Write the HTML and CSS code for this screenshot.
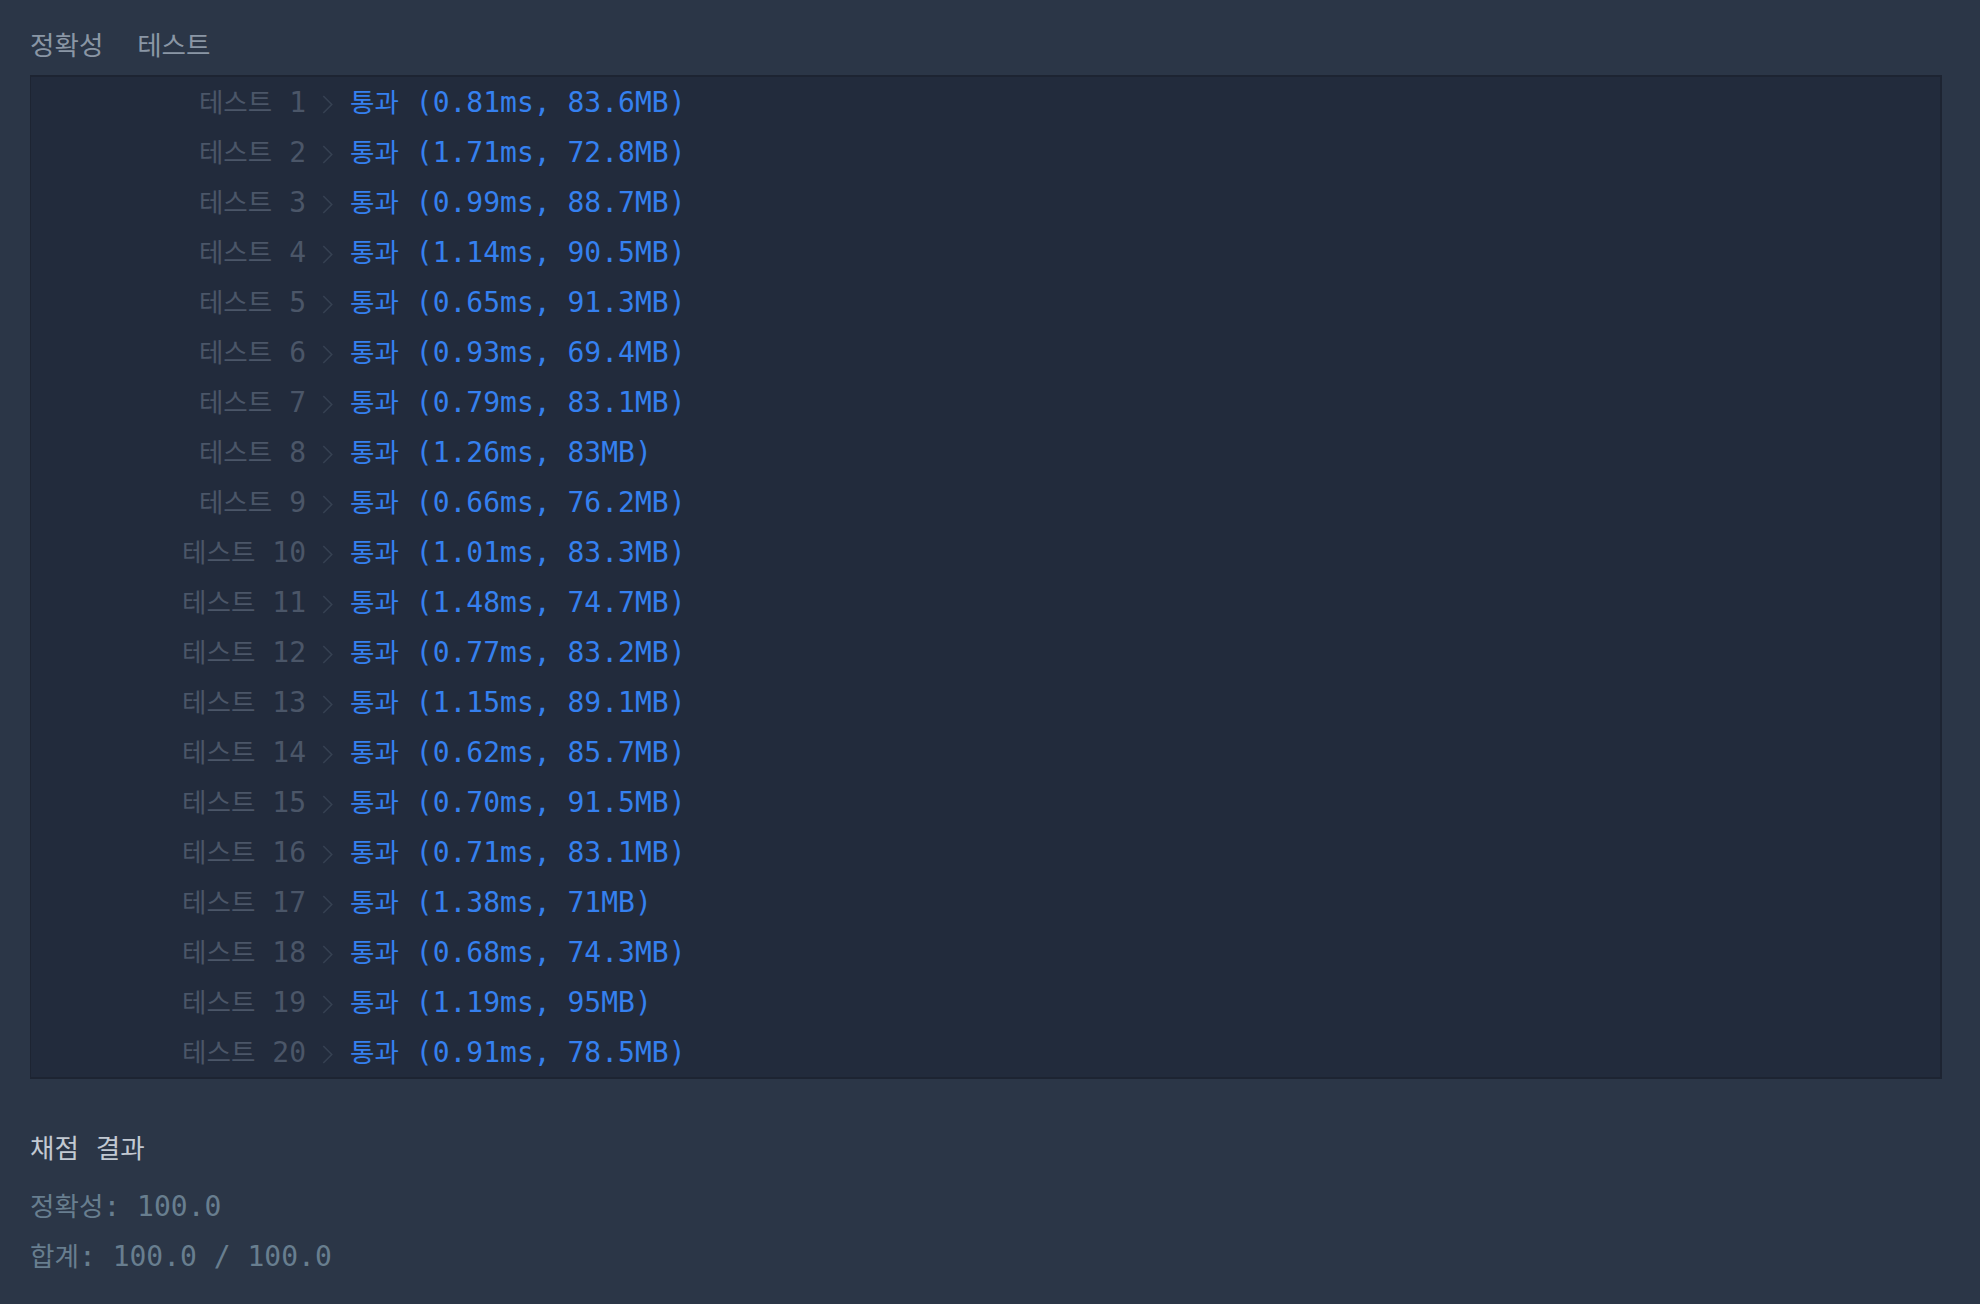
FILE: index.html
```html
<!doctype html>
<html lang="ko">
  <head>
    <meta charset="UTF-8" />
    <meta name="viewport" content="width=device-width, initial-scale=1.0" />
    <title>채점 결과</title>
    <link rel="stylesheet" href="styles.css">
  </head>

  <body>
    <div class="section-title"><span class="ko">정확성</span>  <span class="ko">테스트</span></div>

    <div class="result-box">
      <div class="test-row"><span class="test-label"><span class="ko">테스트</span> 1</span><svg class="chevron" viewBox="0 0 10 18"><path d="M1 1 L9 9 L1 17" /></svg><span class="test-result"><span class="ko">통과</span> (0.81ms, 83.6MB)</span></div>
      <div class="test-row"><span class="test-label"><span class="ko">테스트</span> 2</span><svg class="chevron" viewBox="0 0 10 18"><path d="M1 1 L9 9 L1 17" /></svg><span class="test-result"><span class="ko">통과</span> (1.71ms, 72.8MB)</span></div>
      <div class="test-row"><span class="test-label"><span class="ko">테스트</span> 3</span><svg class="chevron" viewBox="0 0 10 18"><path d="M1 1 L9 9 L1 17" /></svg><span class="test-result"><span class="ko">통과</span> (0.99ms, 88.7MB)</span></div>
      <div class="test-row"><span class="test-label"><span class="ko">테스트</span> 4</span><svg class="chevron" viewBox="0 0 10 18"><path d="M1 1 L9 9 L1 17" /></svg><span class="test-result"><span class="ko">통과</span> (1.14ms, 90.5MB)</span></div>
      <div class="test-row"><span class="test-label"><span class="ko">테스트</span> 5</span><svg class="chevron" viewBox="0 0 10 18"><path d="M1 1 L9 9 L1 17" /></svg><span class="test-result"><span class="ko">통과</span> (0.65ms, 91.3MB)</span></div>
      <div class="test-row"><span class="test-label"><span class="ko">테스트</span> 6</span><svg class="chevron" viewBox="0 0 10 18"><path d="M1 1 L9 9 L1 17" /></svg><span class="test-result"><span class="ko">통과</span> (0.93ms, 69.4MB)</span></div>
      <div class="test-row"><span class="test-label"><span class="ko">테스트</span> 7</span><svg class="chevron" viewBox="0 0 10 18"><path d="M1 1 L9 9 L1 17" /></svg><span class="test-result"><span class="ko">통과</span> (0.79ms, 83.1MB)</span></div>
      <div class="test-row"><span class="test-label"><span class="ko">테스트</span> 8</span><svg class="chevron" viewBox="0 0 10 18"><path d="M1 1 L9 9 L1 17" /></svg><span class="test-result"><span class="ko">통과</span> (1.26ms, 83MB)</span></div>
      <div class="test-row"><span class="test-label"><span class="ko">테스트</span> 9</span><svg class="chevron" viewBox="0 0 10 18"><path d="M1 1 L9 9 L1 17" /></svg><span class="test-result"><span class="ko">통과</span> (0.66ms, 76.2MB)</span></div>
      <div class="test-row"><span class="test-label"><span class="ko">테스트</span> 10</span><svg class="chevron" viewBox="0 0 10 18"><path d="M1 1 L9 9 L1 17" /></svg><span class="test-result"><span class="ko">통과</span> (1.01ms, 83.3MB)</span></div>
      <div class="test-row"><span class="test-label"><span class="ko">테스트</span> 11</span><svg class="chevron" viewBox="0 0 10 18"><path d="M1 1 L9 9 L1 17" /></svg><span class="test-result"><span class="ko">통과</span> (1.48ms, 74.7MB)</span></div>
      <div class="test-row"><span class="test-label"><span class="ko">테스트</span> 12</span><svg class="chevron" viewBox="0 0 10 18"><path d="M1 1 L9 9 L1 17" /></svg><span class="test-result"><span class="ko">통과</span> (0.77ms, 83.2MB)</span></div>
      <div class="test-row"><span class="test-label"><span class="ko">테스트</span> 13</span><svg class="chevron" viewBox="0 0 10 18"><path d="M1 1 L9 9 L1 17" /></svg><span class="test-result"><span class="ko">통과</span> (1.15ms, 89.1MB)</span></div>
      <div class="test-row"><span class="test-label"><span class="ko">테스트</span> 14</span><svg class="chevron" viewBox="0 0 10 18"><path d="M1 1 L9 9 L1 17" /></svg><span class="test-result"><span class="ko">통과</span> (0.62ms, 85.7MB)</span></div>
      <div class="test-row"><span class="test-label"><span class="ko">테스트</span> 15</span><svg class="chevron" viewBox="0 0 10 18"><path d="M1 1 L9 9 L1 17" /></svg><span class="test-result"><span class="ko">통과</span> (0.70ms, 91.5MB)</span></div>
      <div class="test-row"><span class="test-label"><span class="ko">테스트</span> 16</span><svg class="chevron" viewBox="0 0 10 18"><path d="M1 1 L9 9 L1 17" /></svg><span class="test-result"><span class="ko">통과</span> (0.71ms, 83.1MB)</span></div>
      <div class="test-row"><span class="test-label"><span class="ko">테스트</span> 17</span><svg class="chevron" viewBox="0 0 10 18"><path d="M1 1 L9 9 L1 17" /></svg><span class="test-result"><span class="ko">통과</span> (1.38ms, 71MB)</span></div>
      <div class="test-row"><span class="test-label"><span class="ko">테스트</span> 18</span><svg class="chevron" viewBox="0 0 10 18"><path d="M1 1 L9 9 L1 17" /></svg><span class="test-result"><span class="ko">통과</span> (0.68ms, 74.3MB)</span></div>
      <div class="test-row"><span class="test-label"><span class="ko">테스트</span> 19</span><svg class="chevron" viewBox="0 0 10 18"><path d="M1 1 L9 9 L1 17" /></svg><span class="test-result"><span class="ko">통과</span> (1.19ms, 95MB)</span></div>
      <div class="test-row"><span class="test-label"><span class="ko">테스트</span> 20</span><svg class="chevron" viewBox="0 0 10 18"><path d="M1 1 L9 9 L1 17" /></svg><span class="test-result"><span class="ko">통과</span> (0.91ms, 78.5MB)</span></div>
    </div>

    <div class="summary">
      <div class="summary-title"><span class="ko">채점</span> <span class="ko">결과</span></div>
      <div class="summary-line"><span class="ko">정확성</span>: 100.0</div>
      <div class="summary-line"><span class="ko">합계</span>: 100.0 / 100.0</div>
    </div>
  </body>
</html>
```

FILE: styles.css
```css
body {
  margin: 0;
  padding: 19px 30px 0 30px;
  background: #2b3647;
  font-family: 'DejaVu Sans Mono', 'Noto Sans CJK KR', monospace;
  font-size: 28px;
  color: #8a96a5;
}

.ko {
  font-family: 'Noto Sans CJK KR', sans-serif;
  font-size: 26.6px;
}

.section-title {
  height: 50px;
  line-height: 50px;
  white-space: pre;
  color: #8a96a5;
  margin-bottom: 6px;
}

.result-box {
  width: 1909px;
  background: #222b3c;
  border: 2px solid #1d2432;
  border-left-width: 1px;
}

.test-row {
  display: flex;
  align-items: center;
  height: 50px;
  line-height: 50px;
}

.test-label {
  width: 275px;
  text-align: right;
  color: #4b5668;
}

.chevron {
  width: 11px;
  height: 19px;
  margin-left: 16px;
  margin-top: 4px;
  flex-shrink: 0;
}

.chevron path {
  fill: none;
  stroke: #364152;
  stroke-width: 1.5;
}

.test-result {
  margin-left: 17px;
  color: #3580ef;
  white-space: pre;
}

.summary {
  margin-top: 43px;
}

.summary-title {
  height: 50px;
  line-height: 50px;
  color: #c2c9d2;
  margin-bottom: 8px;
}

.summary-line {
  height: 50px;
  line-height: 50px;
  color: #687e8f;
}
```
